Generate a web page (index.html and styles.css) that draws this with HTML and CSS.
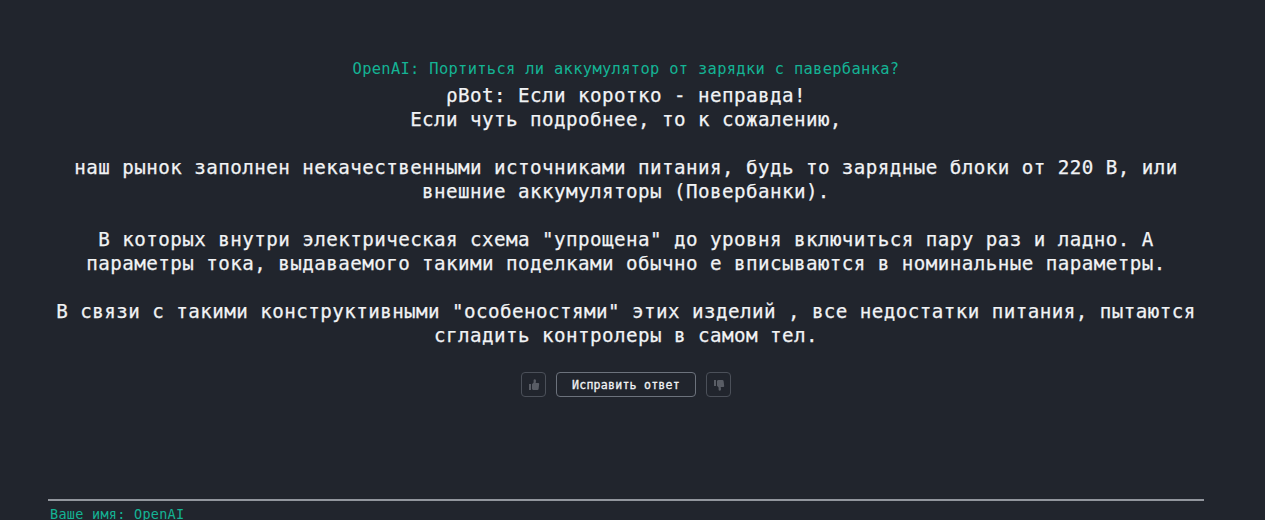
FILE: index.html
```html
<!DOCTYPE html>
<html lang="ru">
<head>
    <meta charset="UTF-8">
    <meta name="viewport" content="width=device-width, initial-scale=1.0">
    <title>ρBot</title>
    <link rel="stylesheet" href="styles.css">
</head>
<body>
    <main class="chat">
        <div class="question">OpenAI: Портиться ли аккумулятор от зарядки с павербанка?</div>
        <div class="answer">
            ρBot: Если коротко - неправда!<br>
            Если чуть подробнее, то к сожалению,<br>
            <br>
            наш рынок заполнен некачественными источниками питания, будь то зарядные блоки от 220 В, или<br>
            внешние аккумуляторы (Повербанки).<br>
            <br>
            В которых внутри электрическая схема "упрощена" до уровня включиться пару раз и ладно. А<br>
            параметры тока, выдаваемого такими поделками обычно е вписываются в номинальные параметры.<br>
            <br>
            В связи с такими конструктивными "особеностями" этих изделий , все недостатки питания, пытаются<br>
            сгладить контролеры в самом тел.
        </div>
        <div class="actions">
            <button type="button" class="btn vote" aria-label="Нравится">
                <svg class="icon" viewBox="0 0 12 12">
                    <path d="M1 5h2v6H1zM4 5.2 5.6 3.4V1Q5.8.3 6.8.3 8.2.5 8 2L7.7 4h2.5q1.1.1 1 1.1L10.6 10q-.2 1-1.1 1H5.2L4 10.3z"/>
                </svg>
            </button>
            <button type="button" class="btn edit">Исправить ответ</button>
            <button type="button" class="btn vote" aria-label="Не нравится">
                <svg class="icon icon-down" viewBox="0 0 12 12">
                    <path d="M1 5h2v6H1zM4 5.2 5.6 3.4V1Q5.8.3 6.8.3 8.2.5 8 2L7.7 4h2.5q1.1.1 1 1.1L10.6 10q-.2 1-1.1 1H5.2L4 10.3z"/>
                </svg>
            </button>
        </div>
    </main>
    <footer class="footer">
        <div class="user">Ваше имя: OpenAI</div>
    </footer>
</body>
</html>
```

FILE: styles.css
```css
* {
    box-sizing: border-box;
}
body {
    height: 520px;
    margin: 0;
    padding: 58px 61px 0 48px;
    display: flex;
    flex-direction: column;
    overflow: hidden;
    background-color: #21252d;
    color: #f1f3f5;
    font-family: "DejaVu Sans Mono", monospace;
}
.chat {
    flex: none;
    height: 441px;
    text-align: center;
    white-space: nowrap;
}
.question {
    height: 26px;
    color: #14b394;
    font-size: 15.4px;
    line-height: 22px;
    letter-spacing: 0.329px;
}
.answer {
    font-size: 19.2px;
    line-height: 24px;
    letter-spacing: 0.441px;
    -webkit-text-stroke: 0.25px #f1f3f5;
}
.actions {
    display: flex;
    justify-content: center;
    gap: 10px;
    margin-top: 24px;
}
.btn {
    height: 25px;
    padding: 0;
    background: none;
    border: 1px solid #6c727c;
    border-radius: 4px;
    color: #f1f3f5;
    font-family: inherit;
}
.edit {
    width: 140px;
    padding-top: 1px;
    font-size: 11.6px;
    line-height: 22px;
    letter-spacing: 0.216px;
    -webkit-text-stroke: 0.3px #f1f3f5;
}
.vote {
    width: 25px;
    display: flex;
    align-items: center;
    justify-content: center;
    border-color: #4b5059;
}
.icon {
    width: 12px;
    height: 12px;
    fill: #595d65;
}
.icon-down {
    transform: scaleY(-1);
}
.footer {
    flex: none;
    border-top: 2px solid #92969d;
    padding: 4px 2px 0;
}
.user {
    color: #14b394;
    font-size: 13.5px;
    line-height: 18px;
    letter-spacing: 0.272px;
}
```
